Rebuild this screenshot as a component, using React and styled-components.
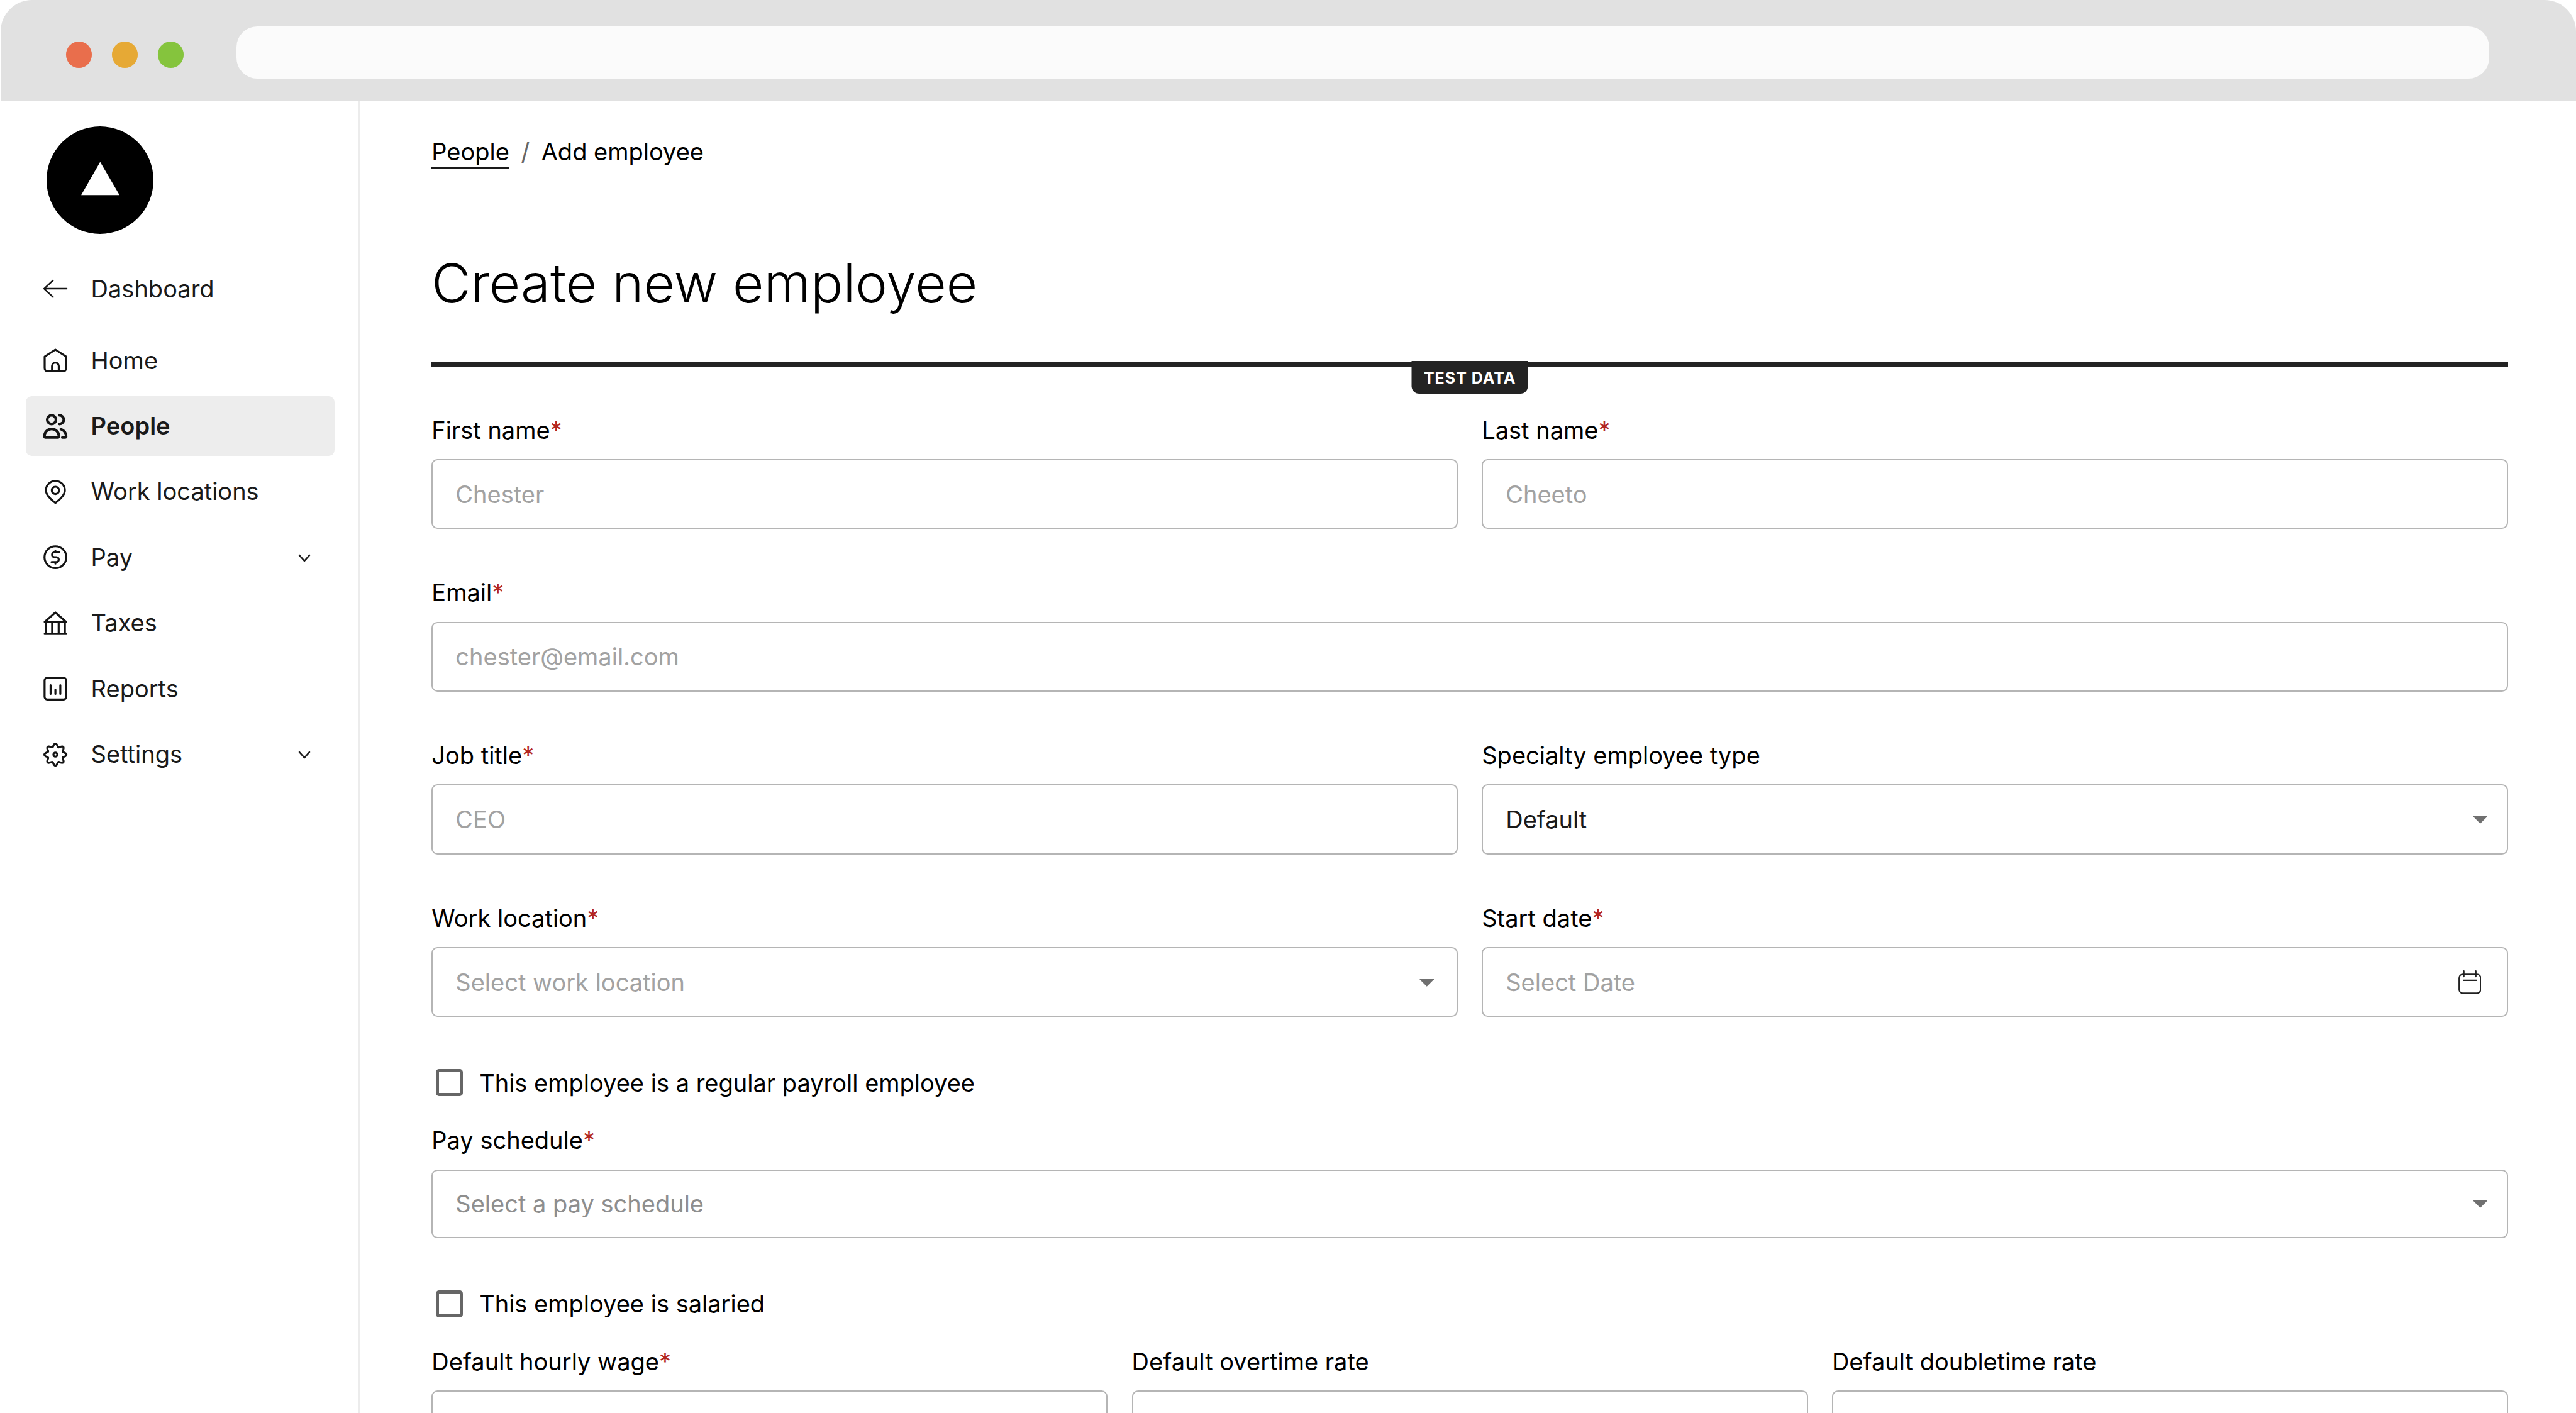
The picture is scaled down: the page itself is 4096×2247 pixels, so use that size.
import styled, { createGlobalStyle } from "styled-components";

const GlobalStyle = createGlobalStyle`
  * {
    box-sizing: border-box;
  }
  body {
    margin: 0;
    background: #fff;
    color: #000;
    font-family: Inter, "Liberation Sans", sans-serif;
    font-size: 38px;
    line-height: 48px;
    overflow: hidden;
  }
`;

// gear outline with eight rounded teeth
const gearPath = () => {
  const points = [];
  for (let i = 0; i < 240; i++) {
    const angle = (i / 240) * Math.PI * 2;
    const r = 52 + 8.5 * Math.cos(8 * angle);
    const x = 66 + r * Math.sin(angle);
    const y = 66 - r * Math.cos(angle);
    points.push(`${x.toFixed(1)} ${y.toFixed(1)}`);
  }
  return `M${points.join("L")}Z`;
};

const icons = {
  back: <path d="M128 66H4M53 20L4 66L53 112" strokeWidth="8.5" />,
  home: (
    <>
      <path d="M66 7L125 45V110a16 16 0 0 1-16 16H23a16 16 0 0 1-16-16V45Z" />
      <path d="M47.5 126V97a18.5 18.5 0 0 1 37 0V126" />
    </>
  ),
  people: (
    <g strokeWidth="14.5">
      <circle cx="45" cy="29" r="24" />
      <path d="M88 5a24 24 0 0 1 0 48" />
      <path d="M12 127a6.5 6.5 0 0 1-6.5-7a40 40 0 0 1 80 0a6.5 6.5 0 0 1-6.5 7Z" />
      <path d="M96 81a40 40 0 0 1 29 39q0 7-7 7H104" />
    </g>
  ),
  pin: (
    <>
      <path d="M66 127C50 115 14 88 14 58a52 52 0 0 1 104 0C118 88 82 115 66 127Z" />
      <circle cx="66" cy="58" r="20" />
    </>
  ),
  pay: (
    <>
      <circle cx="66" cy="66" r="60" />
      <path d="M88 39H61a13.5 13.5 0 0 0 0 27H71a13.5 13.5 0 0 1 0 27H45M66 31V39M66 93V101" />
    </>
  ),
  taxes: (
    <path d="M66 7L125 59H7ZM7 125H125M14 59V125M48 59V125M84 59V125M118 59V125" />
  ),
  reports: (
    <>
      <rect x="6.5" y="6.5" width="119" height="119" rx="15" />
      <path d="M39.5 47V95M66 72V95M93 47V95" />
    </>
  ),
  settings: (
    <>
      <path d={gearPath()} />
      <circle cx="66" cy="66" r="11" />
    </>
  ),
};

const navItems = [
  { label: "Home", icon: "home" },
  { label: "People", icon: "people", active: true },
  { label: "Work locations", icon: "pin" },
  { label: "Pay", icon: "pay", expandable: true },
  { label: "Taxes", icon: "taxes" },
  { label: "Reports", icon: "reports" },
  { label: "Settings", icon: "settings", expandable: true },
];

const NavEntry = ({ label, icon, active, expandable }) => (
  <NavItem $active={active}>
    <NavIcon viewBox="0 0 132 132">{icons[icon]}</NavIcon>
    <NavLabel>{label}</NavLabel>
    {expandable && (
      <Chevron viewBox="0 0 22 16">
        <path d="M3 3L11 12L19 3" />
      </Chevron>
    )}
  </NavItem>
);

const Field = ({ label, required, value, placeholder, muted, arrow, date, compact }) => (
  <FieldWrapper>
    <Label>
      {label}
      {required && <Required>*</Required>}
    </Label>
    <Control $compact={compact} $arrow={arrow} $date={date}>
      {value ? (
        <Value>{value}</Value>
      ) : (
        <Placeholder $muted={muted}>{placeholder}</Placeholder>
      )}
      {arrow && (
        <Arrow viewBox="0 0 24 12">
          <path d="M0 0H24L12 12Z" />
        </Arrow>
      )}
      {date && (
        <Calendar viewBox="0 0 126 130">
          <rect x="4" y="22" width="118" height="104" rx="20" />
          <path d="M30 4V35M96 4V35M28 55H99" />
        </Calendar>
      )}
    </Control>
  </FieldWrapper>
);

const CheckField = ({ label }) => (
  <CheckRow>
    <Box />
    <span>{label}</span>
  </CheckRow>
);

export default function App() {
  return (
    <Window>
      <GlobalStyle />
      <TitleBar>
        <Lights>
          <Light $color="#e96e4c" />
          <Light $color="#e6a935" />
          <Light $color="#85c43d" />
        </Lights>
        <AddressBar />
      </TitleBar>
      <Page>
        <Sidebar>
          <Logo viewBox="0 0 196 197">
            <ellipse cx="98" cy="98.5" rx="98" ry="98.5" />
            <path d="M98.3 65L133.8 126H63.5Z" fill="#fff" />
          </Logo>
          <NavEntry label="Dashboard" icon="back" />
          <Nav>
            {navItems.map((item) => (
              <NavEntry key={item.label} {...item} />
            ))}
          </Nav>
        </Sidebar>
        <Content>
          <Breadcrumb>
            <Crumb>People</Crumb>
            <Slash>/</Slash>
            <span>Add employee</span>
          </Breadcrumb>
          <Title>Create new employee</Title>
          <Divider>
            <Badge>TEST DATA</Badge>
          </Divider>
          <Form>
            <Row $columns={2}>
              <Field label="First name" required placeholder="Chester" />
              <Field label="Last name" required placeholder="Cheeto" />
            </Row>
            <Row $columns={1}>
              <Field label="Email" required placeholder="chester@email.com" />
            </Row>
            <Row $columns={2}>
              <Field label="Job title" required placeholder="CEO" />
              <Field label="Specialty employee type" value="Default" arrow="inner" />
            </Row>
            <Row $columns={2}>
              <Field
                label="Work location"
                required
                placeholder="Select work location"
                arrow="outer"
              />
              <Field label="Start date" required placeholder="Select Date" date />
            </Row>
            <Group>
              <CheckField label="This employee is a regular payroll employee" />
              <Row $columns={1}>
                <Field
                  label="Pay schedule"
                  required
                  placeholder="Select a pay schedule"
                  muted
                  arrow="inner"
                  compact
                />
              </Row>
            </Group>
            <Group>
              <CheckField label="This employee is salaried" />
              <Row $columns={3}>
                <Field label="Default hourly wage" required />
                <Field label="Default overtime rate" />
                <Field label="Default doubletime rate" />
              </Row>
            </Group>
          </Form>
        </Content>
      </Page>
    </Window>
  );
}

const Window = styled.div`
  display: flex;
  flex-direction: column;
  width: 4096px;
  height: 2247px;
  overflow: hidden;
`;
const TitleBar = styled.header`
  display: flex;
  flex: none;
  align-items: flex-start;
  height: 160.5px;
  margin-left: 1px;
  padding: 41.5px 138px 0 103.8px;
  border-radius: 50px 50px 0 0;
  background: #e1e1e1;
`;
const Lights = styled.div`
  display: flex;
  gap: 31.3px;
  width: 271px;
  padding-top: 24.5px;
`;
const Light = styled.span`
  width: 41.7px;
  height: 41.7px;
  border-radius: 50%;
  background: ${(props) => props.$color};
`;
const AddressBar = styled.div`
  flex: 1;
  height: 83.5px;
  border-radius: 33px;
  background: #fbfbfb;
`;
const Page = styled.div`
  display: flex;
  flex: 1;
  min-height: 0;
`;
const Sidebar = styled.aside`
  display: flex;
  flex: none;
  flex-direction: column;
  width: 572px;
  padding: 40px 38.5px 0 40.6px;
  border-right: 2px solid #ececec;
`;
const Logo = styled.svg`
  flex: none;
  width: 170px;
  height: 171px;
  margin: 0 0 40px 33px;
`;
const Nav = styled.nav`
  display: flex;
  flex-direction: column;
  gap: 8.9px;
  margin-top: 18.6px;
`;
const NavItem = styled.a`
  display: flex;
  flex: none;
  align-items: center;
  gap: 37.8px;
  height: 95.5px;
  padding: 0 37px 0 28px;
  border-radius: 9.5px;
  color: #1a1a1a;
  background: ${(props) => (props.$active ? "#ededed" : "transparent")};
  font-weight: ${(props) => (props.$active ? 600 : 400)};
`;
const NavIcon = styled.svg`
  flex: none;
  width: 38.2px;
  height: 38.2px;
  overflow: visible;
  fill: none;
  stroke: #141414;
  stroke-width: 11;
  stroke-linecap: round;
  stroke-linejoin: round;
`;
const NavLabel = styled.span`
  flex: 1;
  padding-bottom: 1.5px;
`;
const Chevron = styled.svg`
  width: 22px;
  height: 16px;
  margin-top: 3px;
  fill: none;
  stroke: #1a1a1a;
  stroke-width: 2.6;
  stroke-linecap: round;
  stroke-linejoin: round;
`;
const Content = styled.main`
  flex: 1;
  min-width: 0;
  padding: 56px 108px 0 114.3px;
`;
const Breadcrumb = styled.div`
  display: flex;
  align-items: flex-start;
  gap: 18.5px;
  height: 51px;
`;
const Crumb = styled.a`
  border-bottom: 3px solid #1a1a1a;
`;
const Slash = styled.span`
  color: #666;
`;
const Title = styled.h1`
  margin: 130px 0 74px;
  font-size: 85.4px;
  font-weight: 300;
  line-height: 104px;
`;
const Divider = styled.div`
  position: relative;
  height: 7px;
  background: #232323;
`;
const Badge = styled.span`
  position: absolute;
  top: -2px;
  left: 50%;
  width: 185px;
  height: 52px;
  border-radius: 0 0 12px 12px;
  background: #232323;
  color: #fff;
  font-size: 25px;
  font-weight: 700;
  letter-spacing: 1px;
  line-height: 55px;
  text-align: center;
  transform: translateX(-50%);
`;
const Form = styled.form`
  display: flex;
  flex-direction: column;
  gap: 77px;
  padding-top: 77.4px;
`;
const Row = styled.div`
  display: grid;
  grid-template-columns: repeat(${(props) => props.$columns}, 1fr);
  gap: 38.2px;
`;
const Group = styled.div`
  display: flex;
  flex-direction: column;
  gap: 40px;
`;
const FieldWrapper = styled.div`
  display: flex;
  flex-direction: column;
  gap: 22.4px;
`;
const Label = styled.label`
  white-space: nowrap;
`;
const Required = styled.span`
  color: #b3261e;
`;
const arrowInset = { inner: "31px", outer: "36px" };
const Control = styled.div`
  display: flex;
  align-items: center;
  justify-content: space-between;
  height: ${(props) => (props.$compact ? 109 : 111.2)}px;
  padding-left: 36px;
  padding-right: ${(props) => (props.$date ? "41px" : arrowInset[props.$arrow] || "35px")};
  border: 2px solid #b5b5b5;
  border-radius: 9.5px;
`;
const Value = styled.span`
  color: #1a1a1a;
`;
const Placeholder = styled.span`
  color: ${(props) => (props.$muted ? "#8e8e8e" : "#a2a2a2")};
`;
const Arrow = styled.svg`
  width: 23.5px;
  height: 11.8px;
  margin-top: 2px;
  fill: #707070;
`;
const Calendar = styled.svg`
  width: 36.5px;
  height: 37.6px;
  fill: none;
  stroke: #222;
  stroke-width: 7.5;
  stroke-linecap: round;
`;
const CheckRow = styled.label`
  display: flex;
  align-items: center;
  gap: 26.5px;
  height: 55.2px;
  padding-left: 6.7px;
`;
const Box = styled.span`
  width: 42.7px;
  height: 42.7px;
  border: 5px solid #666;
  border-radius: 5px;
`;
